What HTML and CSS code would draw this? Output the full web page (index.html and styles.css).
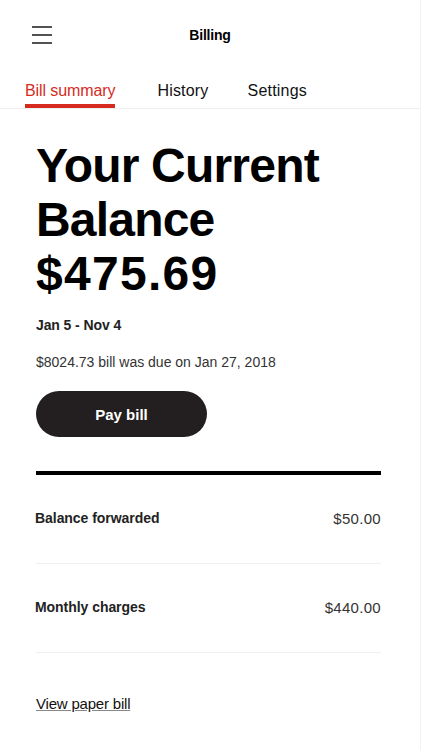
FILE: index.html
```html
<!DOCTYPE html>
<html lang="en">
<head>
    <title>Billing</title>
    <link rel="stylesheet" href="styles.css">
</head>
<body>
    <div class="app">
        <header class="topbar">
            <button class="menu" aria-label="Menu">
                <svg width="20" height="18" viewBox="0 0 20 18">
                    <path d="M0 1H20M0 9H20M0 17H20" stroke="#1a1a1a" stroke-width="1.4" fill="none"/>
                </svg>
            </button>
            <div class="title">Billing</div>
        </header>
        <nav class="tabs">
            <a class="tab active">Bill summary</a>
            <a class="tab">History</a>
            <a class="tab">Settings</a>
        </nav>

        <main class="content">
            <h1 class="headline">Your Current Balance <span class="balance">$475.69</span></h1>
            <div class="period">Jan 5 - Nov 4</div>
            <div class="due">$8024.73 bill was due on Jan 27, 2018</div>
            <button class="pay-btn">Pay bill</button>

            <div class="lines">
                <div class="line-item">
                    <span class="label">Balance forwarded</span>
                    <span class="amount">$50.00</span>
                </div>
                <div class="line-item">
                    <span class="label">Monthly charges</span>
                    <span class="amount">$440.00</span>
                </div>
            </div>

            <a class="paper-link">View paper bill</a>
        </main>
    </div>
</body>
</html>
```

FILE: styles.css
```css
body {
    margin: 0;
    background-color: #ffffff;
    font-family: "Liberation Sans", Arial, sans-serif;
    color: #000;
}

.app {
    width: 420px;
    min-height: 750px;
    border-right: 1px solid #f2f2f2;
}

.topbar {
    height: 70px;
    display: flex;
    align-items: center;
    position: relative;
}

.menu {
    background: none;
    border: none;
    padding: 0;
    margin-left: 32px;
    width: 20px;
    height: 18px;
    display: flex;
}

.title {
    position: absolute;
    left: 0;
    right: 0;
    text-align: center;
    font-size: 14px;
    font-weight: bold;
    letter-spacing: -0.2px;
    pointer-events: none;
}

.tabs {
    display: flex;
    gap: 39px;
    padding-left: 25px;
    height: 38px;
    border-bottom: 1px solid #eeeeee;
}

.tab {
    font-size: 16px;
    color: #111;
    padding-top: 12px;
    box-sizing: border-box;
    height: 38px;
    letter-spacing: 0.2px;
}

.tab.active {
    color: #d52b1e;
    border-bottom: 4px solid #d52b1e;
    letter-spacing: -0.1px;
    margin-right: 3px;
}

.content {
    padding: 30px 39px 0 36px;
}

.headline {
    margin: 0;
    font-size: 48px;
    line-height: 54px;
    font-weight: bold;
    letter-spacing: -0.8px;
    width: 300px;
}

.balance {
    letter-spacing: 1.3px;
}

.period {
    margin-top: 16px;
    font-size: 14px;
    font-weight: bold;
    color: #222;
    letter-spacing: -0.1px;
}

.due {
    margin-top: 21px;
    font-size: 14px;
    color: #333;
    letter-spacing: 0;
}

.pay-btn {
    margin-top: 21px;
    width: 171px;
    height: 46px;
    border: none;
    border-radius: 23px;
    background-color: #231f20;
    color: #fff;
    font-family: inherit;
    font-size: 15px;
    font-weight: bold;
    cursor: pointer;
}

.lines {
    margin-top: 34px;
    border-top: 4px solid #000;
}

.line-item {
    display: flex;
    justify-content: space-between;
    align-items: center;
    height: 89px;
    border-bottom: 1px solid #f0f0f0;
    font-size: 14px;
    color: #222;
    padding-bottom: 2px;
    box-sizing: border-box;
}

.line-item .label {
    font-weight: bold;
    margin-left: -1px;
    letter-spacing: -0.05px;
}

.line-item .amount {
    font-size: 15px;
    letter-spacing: 0.3px;
    color: #333;
}

.paper-link {
    display: inline-block;
    margin-top: 42px;
    font-size: 15px;
    color: #111;
    text-decoration: underline;
    text-decoration-color: #888;
    letter-spacing: -0.2px;
}
```
